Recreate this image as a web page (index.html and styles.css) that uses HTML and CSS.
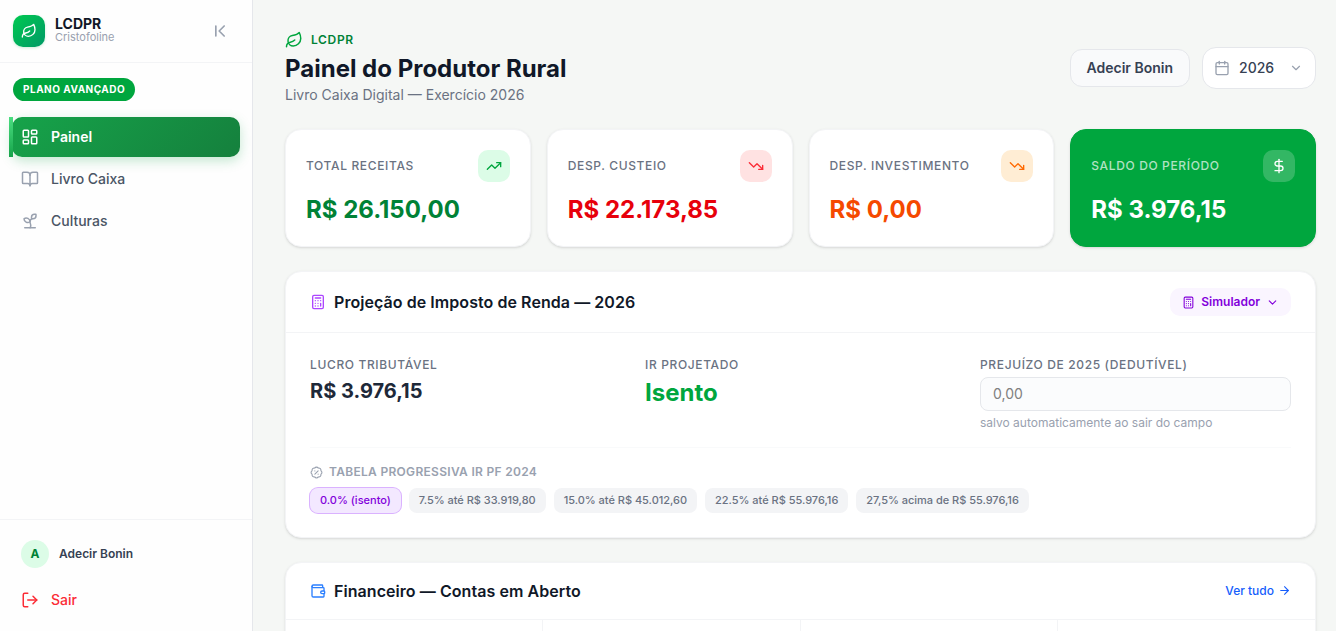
FILE: index.html
```
<!DOCTYPE html>
<html lang="pt-BR">
<head>
    <meta charset="UTF-8">
    <meta name="viewport" content="width=device-width, initial-scale=1.0">
    <title>LCDPR - Painel do Produtor Rural</title>
    <link rel="stylesheet" href="styles.css">
</head>
<body>
    <aside class="sidebar">
        <div class="brand">
            <div class="brand-logo">
                <svg class="icon" width="16" height="16" viewBox="0 0 24 24"><path d="M11 20A7 7 0 0 1 9.8 6.1C15.5 5 17 4.48 19 2c1 2 2 4.18 2 8 0 5.5-4.78 10-10 10Z"/><path d="M2 21c0-3 1.85-5.36 5.08-6C9.5 14.52 12 13 13 12"/></svg>
            </div>
            <div class="brand-text">
                <strong>LCDPR</strong>
                <span>Cristofoline</span>
            </div>
            <button class="collapse" type="button" aria-label="Recolher menu">
                <svg class="icon" width="20" height="20" viewBox="0 0 24 24"><path d="m17 18-6-6 6-6"/><path d="M7 6v12"/></svg>
            </button>
        </div>

        <span class="plan">PLANO AVANÇADO</span>

        <nav class="menu">
            <a class="menu-item active" href="#">
                <svg class="icon" width="18" height="18" viewBox="0 0 24 24"><rect width="7" height="9" x="3" y="3" rx="1"/><rect width="7" height="5" x="14" y="3" rx="1"/><rect width="7" height="9" x="14" y="12" rx="1"/><rect width="7" height="5" x="3" y="16" rx="1"/></svg>
                Painel
            </a>
            <a class="menu-item" href="#">
                <svg class="icon" width="18" height="18" viewBox="0 0 24 24"><path d="M12 7v14"/><path d="M3 18a1 1 0 0 1-1-1V4a1 1 0 0 1 1-1h5a4 4 0 0 1 4 4 4 4 0 0 1 4-4h5a1 1 0 0 1 1 1v13a1 1 0 0 1-1 1h-6a3 3 0 0 0-3 3 3 3 0 0 0-3-3z"/></svg>
                Livro Caixa
            </a>
            <a class="menu-item" href="#">
                <svg class="icon" width="18" height="18" viewBox="0 0 24 24"><path d="M14 9.536V7a4 4 0 0 1 4-4h1.5a.5.5 0 0 1 .5.5V5a4 4 0 0 1-4 4 4 4 0 0 0-4 4c0 2 1 3 1 5a5 5 0 0 1-1 3"/><path d="M4 9a5 5 0 0 1 8 4 5 5 0 0 1-8-4"/><path d="M5 21h14"/></svg>
                Culturas
            </a>
        </nav>

        <div class="sidebar-footer">
            <div class="user">
                <span class="avatar">A</span>
                <span>Adecir Bonin</span>
            </div>
            <a class="logout" href="#">
                <svg class="icon" width="18" height="18" viewBox="0 0 24 24"><path d="m16 17 5-5-5-5"/><path d="M21 12H9"/><path d="M9 21H5a2 2 0 0 1-2-2V5a2 2 0 0 1 2-2h4"/></svg>
                Sair
            </a>
        </div>
    </aside>

    <main class="content">
        <header class="page-header">
            <div>
                <div class="eyebrow">
                    <svg class="icon" width="18" height="18" viewBox="0 0 24 24"><path d="M11 20A7 7 0 0 1 9.8 6.1C15.5 5 17 4.48 19 2c1 2 2 4.18 2 8 0 5.5-4.78 10-10 10Z"/><path d="M2 21c0-3 1.85-5.36 5.08-6C9.5 14.52 12 13 13 12"/></svg>
                    LCDPR
                </div>
                <h1>Painel do Produtor Rural</h1>
                <p>Livro Caixa Digital — Exercício 2026</p>
            </div>
            <div class="filters">
                <span class="producer">Adecir Bonin</span>
                <button class="year" type="button">
                    <svg class="icon" width="16" height="16" viewBox="0 0 24 24"><path d="M8 2v4"/><path d="M16 2v4"/><rect width="18" height="18" x="3" y="4" rx="2"/><path d="M3 10h18"/></svg>
                    <span>2026</span>
                    <svg class="icon" width="14" height="14" viewBox="0 0 24 24"><path d="m6 9 6 6 6-6"/></svg>
                </button>
            </div>
        </header>

        <section class="stats">
            <div class="stat income">
                <div class="stat-top">
                    <span class="label">TOTAL RECEITAS</span>
                    <span class="stat-icon"><svg class="icon" width="16" height="16" viewBox="0 0 24 24"><path d="M16 7h6v6"/><path d="m22 7-8.5 8.5-5-5L2 17"/></svg></span>
                </div>
                <div class="stat-value">R$ 26.150,00</div>
            </div>
            <div class="stat expense">
                <div class="stat-top">
                    <span class="label">DESP. CUSTEIO</span>
                    <span class="stat-icon"><svg class="icon" width="16" height="16" viewBox="0 0 24 24"><path d="M16 17h6v-6"/><path d="m22 17-8.5-8.5-5 5L2 7"/></svg></span>
                </div>
                <div class="stat-value">R$ 22.173,85</div>
            </div>
            <div class="stat investment">
                <div class="stat-top">
                    <span class="label">DESP. INVESTIMENTO</span>
                    <span class="stat-icon"><svg class="icon" width="16" height="16" viewBox="0 0 24 24"><path d="M16 17h6v-6"/><path d="m22 17-8.5-8.5-5 5L2 7"/></svg></span>
                </div>
                <div class="stat-value">R$ 0,00</div>
            </div>
            <div class="stat balance">
                <div class="stat-top">
                    <span class="label">SALDO DO PERÍODO</span>
                    <span class="stat-icon"><svg class="icon" width="16" height="16" viewBox="0 0 24 24"><path d="M12 2v20"/><path d="M17 5H9.5a3.5 3.5 0 0 0 0 7h5a3.5 3.5 0 0 1 0 7H6"/></svg></span>
                </div>
                <div class="stat-value">R$ 3.976,15</div>
            </div>
        </section>

        <section class="card tax">
            <div class="card-header">
                <h2>
                    <svg class="icon" width="16" height="16" viewBox="0 0 24 24"><rect width="16" height="20" x="4" y="2" rx="2"/><path d="M8 6h8M16 14v4M16 10h.01M12 10h.01M8 10h.01M12 14h.01M8 14h.01M12 18h.01M8 18h.01"/></svg>
                    Projeção de Imposto de Renda — 2026
                </h2>
                <button class="simulator" type="button">
                    <svg class="icon" width="13" height="13" viewBox="0 0 24 24"><rect width="16" height="20" x="4" y="2" rx="2"/><path d="M8 6h8M16 14v4M16 10h.01M12 10h.01M8 10h.01M12 14h.01M8 14h.01M12 18h.01M8 18h.01"/></svg>
                    Simulador
                    <svg class="icon" width="13" height="13" viewBox="0 0 24 24"><path d="m6 9 6 6 6-6"/></svg>
                </button>
            </div>
            <div class="card-body">
                <div class="tax-grid">
                    <div>
                        <div class="label">LUCRO TRIBUTÁVEL</div>
                        <div class="profit">R$ 3.976,15</div>
                    </div>
                    <div>
                        <div class="label">IR PROJETADO</div>
                        <div class="exempt">Isento</div>
                    </div>
                    <div>
                        <label class="label" for="loss">PREJUÍZO DE 2025 (DEDUTÍVEL)</label>
                        <input type="text" id="loss" name="loss" placeholder="0,00">
                        <p class="hint">salvo automaticamente ao sair do campo</p>
                    </div>
                </div>
                <div class="brackets">
                    <div class="brackets-title">
                        <svg class="icon" width="13" height="13" viewBox="0 0 24 24"><path d="M3.85 8.62a4 4 0 0 1 4.78-4.77 4 4 0 0 1 6.74 0 4 4 0 0 1 4.78 4.78 4 4 0 0 1 0 6.74 4 4 0 0 1-4.77 4.78 4 4 0 0 1-6.75 0 4 4 0 0 1-4.78-4.77 4 4 0 0 1 0-6.76Z"/><path d="m15 9-6 6M9 9h.01M15 15h.01"/></svg>
                        TABELA PROGRESSIVA IR PF 2024
                    </div>
                    <div class="chips">
                        <span class="chip current">0.0% (isento)</span>
                        <span class="chip">7.5% até R$ 33.919,80</span>
                        <span class="chip">15.0% até R$ 45.012,60</span>
                        <span class="chip">22.5% até R$ 55.976,16</span>
                        <span class="chip">27,5% acima de R$ 55.976,16</span>
                    </div>
                </div>
            </div>
        </section>

        <section class="card finance">
            <div class="card-header">
                <h2>
                    <svg class="icon" width="16" height="16" viewBox="0 0 24 24"><path d="M19 7V4a1 1 0 0 0-1-1H5a2 2 0 0 0 0 4h15a1 1 0 0 1 1 1v4h-3a2 2 0 0 0 0 4h3a1 1 0 0 0 1-1v-2a1 1 0 0 0-1-1"/><path d="M3 5v14a2 2 0 0 0 2 2h15a1 1 0 0 0 1-1v-4"/></svg>
                    Financeiro — Contas em Aberto
                </h2>
                <a class="see-all" href="#">
                    Ver tudo
                    <svg class="icon" width="13" height="13" viewBox="0 0 24 24"><path d="M5 12h14"/><path d="m12 5 7 7-7 7"/></svg>
                </a>
            </div>
            <div class="finance-grid">
                <div></div>
                <div></div>
                <div></div>
                <div></div>
            </div>
        </section>
    </main>
</body>
</html>
```
FILE: styles.css
```
* {
    box-sizing: border-box;
}

body {
    font-family: Inter, "Liberation Sans", sans-serif;
    font-size: 14px;
    line-height: 20px;
    background-color: #f5f7f5;
    color: #101828;
    margin: 0;
    display: flex;
    height: 100vh;
    overflow: hidden;
}

h1,
h2,
p {
    margin: 0;
}

a {
    text-decoration: none;
}

button,
input {
    font-family: inherit;
}

button {
    border: none;
    cursor: pointer;
}

.icon {
    fill: none;
    stroke: currentColor;
    stroke-width: 2;
    stroke-linecap: round;
    stroke-linejoin: round;
    flex-shrink: 0;
}

/* Sidebar */
.sidebar {
    width: 253px;
    flex-shrink: 0;
    display: flex;
    flex-direction: column;
    background-color: #fefefe;
    border-right: 1px solid #e5e7eb;
}

.brand {
    display: flex;
    align-items: center;
    gap: 10px;
    height: 63px;
    padding: 0 22px 0 13px;
    border-bottom: 1px solid #f3f4f6;
}

.brand-logo {
    width: 32px;
    height: 32px;
    display: flex;
    align-items: center;
    justify-content: center;
    border-radius: 10px;
    color: #fff;
    background: linear-gradient(135deg, #00c950, #009966);
    box-shadow: 0 1px 3px rgba(0, 166, 62, 0.2);
}

.brand-text {
    flex: 1;
    display: flex;
    flex-direction: column;
    padding-bottom: 2px;
}

.brand-text strong {
    font-size: 14px;
    line-height: 14px;
    font-weight: 700;
}

.brand-text span {
    font-size: 11px;
    line-height: 13px;
    color: #99a1af;
}

.collapse {
    display: flex;
    padding: 0;
    background: none;
    color: #99a1af;
}

.plan {
    align-self: flex-start;
    margin: 15px 0 16px 13px;
    padding: 4px 10px;
    border-radius: 12px;
    background-color: #00a63e;
    color: #fff;
    font-size: 10px;
    line-height: 15px;
    font-weight: 700;
    letter-spacing: 0.5px;
}

.menu {
    display: flex;
    flex-direction: column;
    gap: 2px;
    padding: 0 12px;
}

.menu-item {
    position: relative;
    display: flex;
    align-items: center;
    gap: 12px;
    height: 40px;
    padding-left: 9px;
    border-radius: 10px;
    color: #4a5565;
    font-weight: 500;
}

.menu-item .icon {
    color: #99a1af;
}

.menu-item.active {
    color: #fff;
    font-weight: 600;
    background: linear-gradient(135deg, #16a34a, #15803d);
    box-shadow: 0 4px 12px rgba(22, 163, 74, 0.25);
}

.menu-item.active .icon {
    color: #fff;
}

.menu-item.active::before {
    content: "";
    position: absolute;
    left: -3px;
    top: 0;
    width: 4px;
    height: 40px;
    background: linear-gradient(#4ade80, #16a34a);
}

.sidebar-footer {
    margin-top: auto;
    height: 112px;
    padding: 20px 21px 0;
    border-top: 1px solid #f3f4f6;
}

.user {
    display: flex;
    align-items: center;
    gap: 10px;
    color: #364153;
    font-size: 12px;
    font-weight: 600;
}

.avatar {
    width: 28px;
    height: 28px;
    border-radius: 50%;
    background-color: #dcfce7;
    color: #008236;
    font-weight: 700;
    line-height: 28px;
    text-align: center;
}

.logout {
    display: flex;
    align-items: center;
    gap: 12px;
    margin-top: 22px;
    color: #fb2c36;
    font-weight: 500;
}

/* Page */
.content {
    flex: 1;
    padding: 32px 20px 0 32px;
    overflow: hidden;
}

.page-header {
    display: flex;
    justify-content: space-between;
    align-items: center;
    margin-bottom: 24px;
}

.eyebrow {
    display: flex;
    align-items: center;
    gap: 8px;
    height: 16px;
    margin-bottom: 5px;
    color: #008236;
    font-size: 12px;
    font-weight: 600;
    letter-spacing: 0.65px;
}

.eyebrow .icon {
    color: #00a63e;
}

h1 {
    font-size: 24px;
    line-height: 32px;
    font-weight: 700;
}

.page-header p {
    color: #6a7282;
}

.filters {
    display: flex;
    align-items: center;
    gap: 12px;
    padding-bottom: 1px;
}

.producer,
.year {
    border: 1px solid #e5e7eb;
    color: #364153;
    font-size: 14px;
    line-height: 20px;
}

.producer {
    padding: 8px 16px;
    border-radius: 12px;
    background-color: #f9fafb;
    font-weight: 600;
}

.year {
    display: flex;
    align-items: center;
    gap: 9px;
    width: 114px;
    height: 42px;
    padding: 0 12px 0 11px;
    border-radius: 14px;
    background-color: #fff;
    font-weight: 500;
}

.year .icon {
    color: #99a1af;
}

.year span {
    flex: 1;
    text-align: left;
}

.label {
    display: block;
    color: #6a7282;
    font-size: 12px;
    line-height: 16px;
    font-weight: 500;
    letter-spacing: 0.64px;
}

/* Totals */
.stats {
    display: grid;
    grid-template-columns: repeat(4, 1fr);
    gap: 16px;
    margin-bottom: 24px;
}

.stat,
.card {
    background-color: #fff;
    border: 1px solid #f3f4f6;
    border-radius: 16px;
    box-shadow: 0 1px 3px rgba(0, 0, 0, 0.1), 0 1px 2px -1px rgba(0, 0, 0, 0.1);
}

.stat {
    padding: 20px;
}

.stat-top {
    display: flex;
    justify-content: space-between;
    align-items: center;
    margin-bottom: 12px;
}

.stat-icon {
    width: 32px;
    height: 32px;
    display: flex;
    align-items: center;
    justify-content: center;
    border-radius: 10px;
}

.stat-value {
    font-size: 24px;
    line-height: 32px;
    font-weight: 700;
}

.income .stat-icon {
    background-color: #dcfce7;
    color: #00a63e;
}

.income .stat-value {
    color: #008236;
}

.expense .stat-icon {
    background-color: #ffe2e2;
    color: #fb2c36;
}

.expense .stat-value {
    color: #e7000b;
}

.investment .stat-icon {
    background-color: #ffedd4;
    color: #ff6900;
}

.investment .stat-value {
    color: #f54900;
}

.stat.balance {
    background-color: #00a63e;
    border-color: #00a63e;
    color: #fff;
}

.balance .label {
    color: rgba(255, 255, 255, 0.7);
}

.balance .stat-icon {
    background-color: rgba(255, 255, 255, 0.2);
}

/* Cards */
.card {
    margin-bottom: 24px;
}

.card-header {
    display: flex;
    justify-content: space-between;
    align-items: center;
    padding: 16px 24px;
    border-bottom: 1px solid #f3f4f6;
}

h2 {
    display: flex;
    align-items: center;
    gap: 8px;
    font-size: 16px;
    line-height: 24px;
    font-weight: 600;
    letter-spacing: 0.06px;
}

.tax h2 .icon {
    color: #ad46ff;
}

.finance h2 .icon {
    color: #2b7fff;
}

.simulator {
    display: flex;
    align-items: center;
    gap: 6px;
    padding: 6px 12px;
    border-radius: 10px;
    background-color: #faf5ff;
    color: #8200db;
    font-size: 12px;
    line-height: 16px;
    font-weight: 600;
}

.card-body {
    padding: 24px;
}

.tax-grid {
    display: grid;
    grid-template-columns: repeat(3, 1fr);
    gap: 24px;
}

.tax-grid .label {
    margin-bottom: 4px;
}

.profit {
    color: #1e2939;
    font-size: 20px;
    line-height: 28px;
    font-weight: 700;
}

.exempt {
    color: #00a63e;
    font-size: 24px;
    line-height: 32px;
    font-weight: 700;
}

input {
    display: block;
    width: 100%;
    height: 34px;
    padding: 0 12px 2px;
    border: 1px solid #e5e7eb;
    border-radius: 8px;
    background-color: #fbfcfd;
    font-size: 14px;
}

input::placeholder {
    color: #808080;
}

.hint {
    margin-top: 4px;
    color: #99a1af;
    font-size: 12px;
    line-height: 16px;
}

.brackets {
    margin-top: 16px;
    padding-top: 16px;
    border-top: 1px solid #f9fafb;
}

.brackets-title {
    display: flex;
    align-items: center;
    gap: 6px;
    margin-bottom: 8px;
    color: #99a1af;
    font-size: 12px;
    line-height: 16px;
    font-weight: 600;
    letter-spacing: 0.3px;
}

.chips {
    display: flex;
    gap: 8px;
}

.chip {
    padding: 4px 10px;
    border-radius: 8px;
    background-color: #f3f4f6;
    color: #6a7282;
    font-size: 11px;
    line-height: 16.5px;
    font-weight: 500;
    letter-spacing: -0.02px;
}

.chip.current {
    background-color: #f3e8ff;
    color: #8200db;
    box-shadow: 0 0 0 1px #dab2ff;
    letter-spacing: 0;
}

.see-all {
    display: flex;
    align-items: center;
    gap: 4px;
    color: #155dfc;
    font-size: 12px;
    line-height: 16px;
    font-weight: 500;
}

.finance-grid {
    display: grid;
    grid-template-columns: repeat(4, 1fr);
}

.finance-grid div {
    height: 96px;
    border-right: 1px solid #f3f4f6;
}

.finance-grid div:last-child {
    border-right: none;
}
```
